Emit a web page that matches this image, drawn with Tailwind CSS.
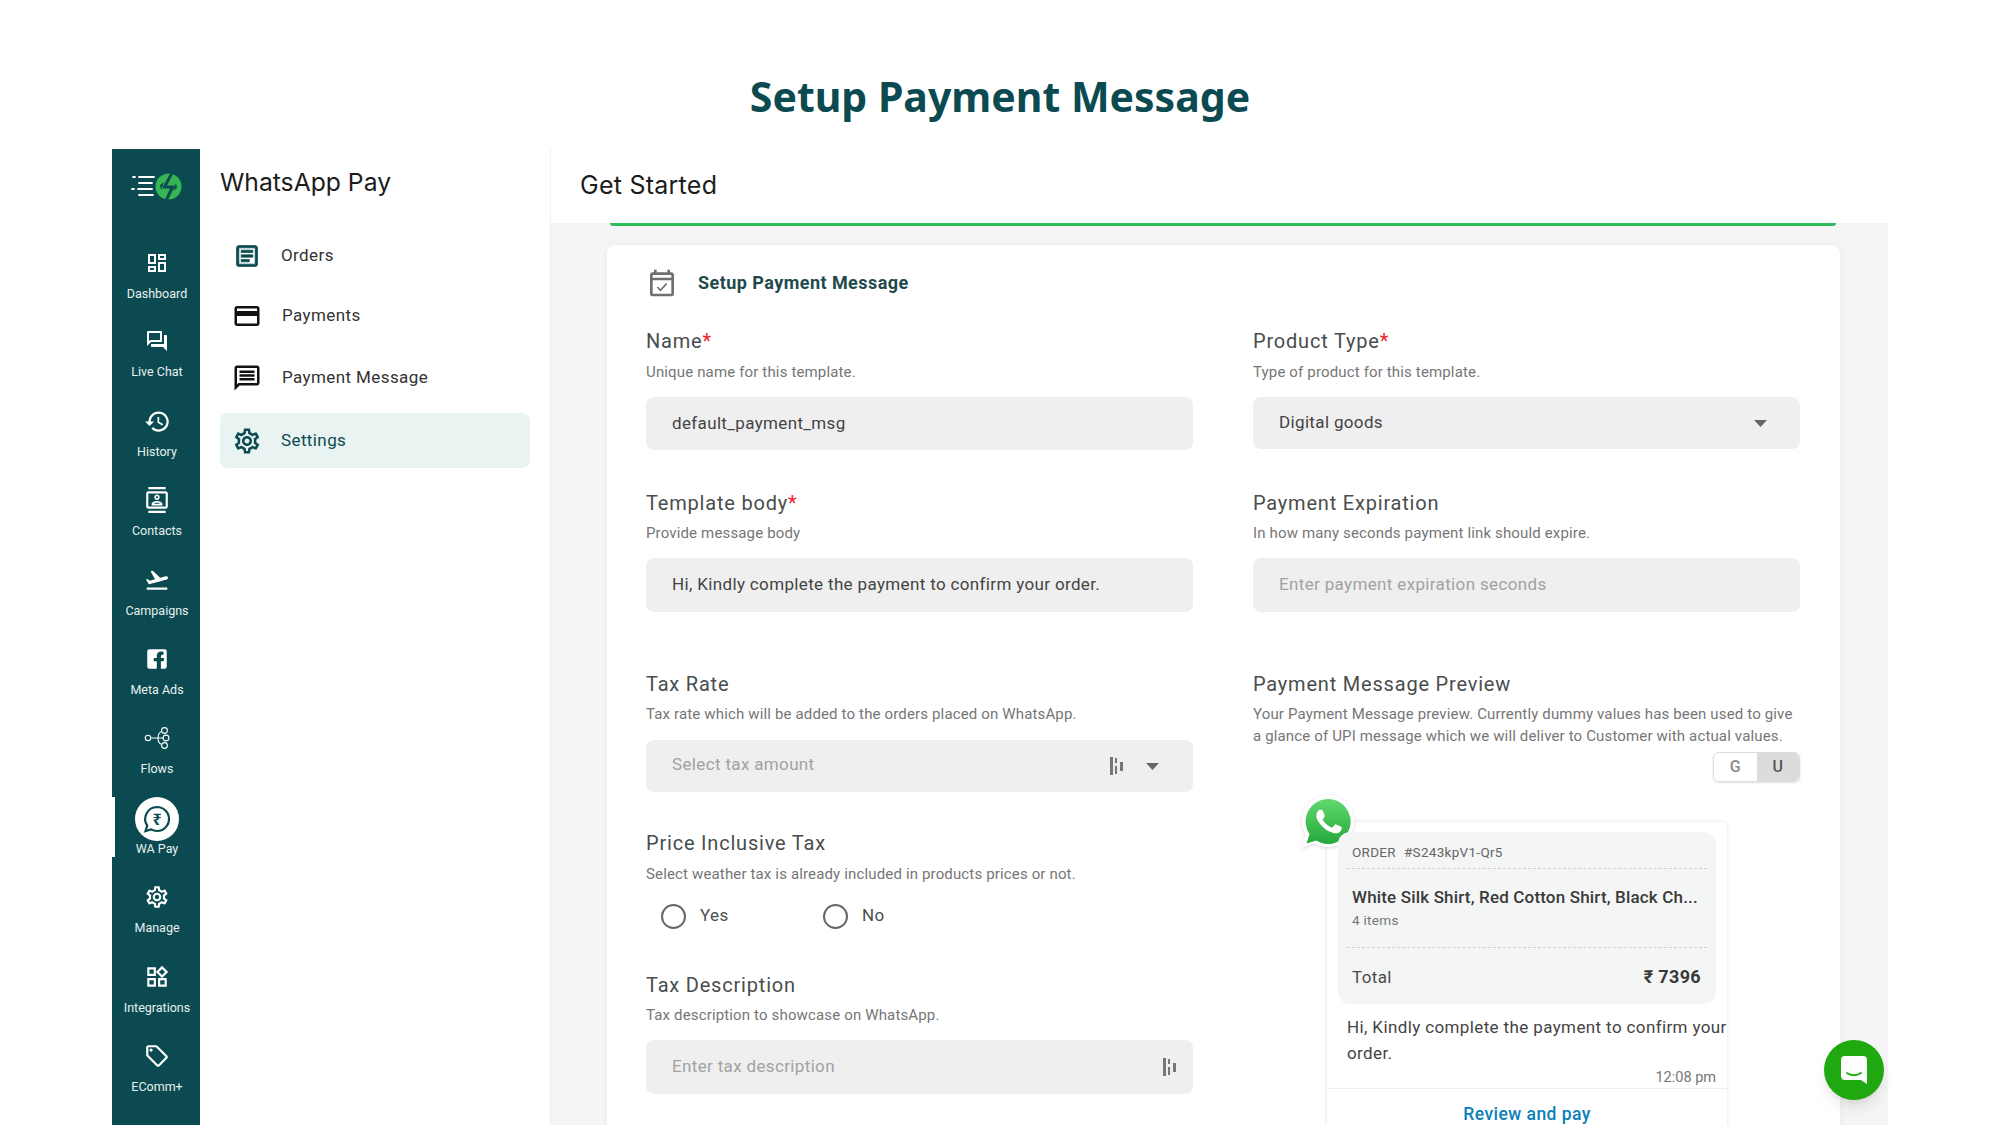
<!DOCTYPE html>
<html lang="en">
<head>
    <meta charset="UTF-8">
    <meta name="viewport" content="width=device-width, initial-scale=1.0">
    <title>Setup Payment Message</title>
    <script src="https://cdn.jsdelivr.net/npm/@tailwindcss/browser@4"></script>
</head>
<body class="relative h-[1125px] w-[2000px] overflow-hidden bg-white font-['Roboto',sans-serif] text-[#3f4343]">
    <h1 class="flex h-[149px] items-start justify-center pt-[69px] font-['Noto_Sans',sans-serif] text-[41px] font-bold leading-[54px] text-[#0b4a50]">Setup Payment Message</h1>

    <div class="mx-[112px] flex h-[976px]">
        <!-- Icon rail -->
        <nav class="flex w-[88px] shrink-0 flex-col bg-[#0b4a50] text-[12.5px] text-[#e8f0f0]">
            <div class="flex h-[74px] items-center justify-center pl-[2px]">
                <svg width="52" height="28" viewBox="10 7 52 28">
                    <g fill="none" stroke="#fff" stroke-width="1.8" stroke-linecap="round">
                        <path d="M12 12h2M18 12h15M18 18h13M11 24h2M17 24h14M18 30h14"/>
                    </g>
                    <circle cx="47.5" cy="21.5" r="13" fill="#35b653"/>
                    <path d="M52 6 43.500 22h8L44 38" fill="none" stroke="#0b4a50" stroke-width="3"/>
                    <path d="M40 25l3-8-4 3zM55 18l-3 8 4-3z" fill="#0b4a50"/>
                </svg>
            </div>
            <a class="flex h-[79.4px] flex-col items-center pl-[2px] pt-[28px]">
                <svg class="h-6 w-6 fill-white" viewBox="0 0 24 24"><path d="M19 5v2h-4V5h4M9 5v6H5V5h4m10 8v6h-4v-6h4M9 17v2H5v-2h4M21 3h-8v6h8V3zM11 3H3v10h8V3zm10 8h-8v10h8V11zm-10 4H3v6h8v-6z"/></svg>
                <span class="mt-[11px] leading-4">Dashboard</span>
            </a>
            <a class="flex h-[79.4px] flex-col items-center pl-[2px] pt-[27px]">
                <svg class="h-6 w-6 fill-white" viewBox="0 0 24 24"><path d="M15 4v7H5.17L4 12.17V4h11m1-2H3c-.55 0-1 .45-1 1v14l4-4h10c.55 0 1-.45 1-1V3c0-.55-.45-1-1-1zm5 4h-2v9H6v2c0 .55.45 1 1 1h11l4 4V7c0-.55-.45-1-1-1z"/></svg>
                <span class="mt-[11px] leading-4">Live Chat</span>
            </a>
            <a class="flex h-[79.4px] flex-col items-center pl-[2px] pt-[26px]">
                <svg class="h-[27px] w-[27px] fill-white" viewBox="0 0 24 24"><path d="M13 3c-4.97 0-9 4.03-9 9H1l3.89 3.89.07.14L9 12H6c0-3.87 3.13-7 7-7s7 3.13 7 7-3.13 7-7 7c-1.93 0-3.68-.79-4.94-2.06l-1.42 1.42C8.27 19.99 10.51 21 13 21c4.97 0 9-4.03 9-9s-4.03-9-9-9zm-1 5v5l4.28 2.54.72-1.21-3.5-2.08V8H12z"/></svg>
                <span class="mt-[9px] leading-4">History</span>
            </a>
            <a class="flex h-[79.4px] flex-col items-center pl-[2px] pt-[26px]">
                <svg class="h-[26px] w-[26px] fill-white" viewBox="0 0 24 24"><path d="M20 0H4v2h16V0zM4 24h16v-2H4v2zM20 4H4c-1.1 0-2 .9-2 2v12c0 1.1.9 2 2 2h16c1.1 0 2-.9 2-2V6c0-1.1-.9-2-2-2zm0 14H4V6h16v12zm-8-6c1.38 0 2.5-1.12 2.5-2.5S13.38 7 12 7 9.5 8.12 9.5 9.5 10.62 12 12 12zm0-3.5c.55 0 1 .45 1 1s-.45 1-1 1-1-.45-1-1 .45-1 1-1zm5 7.49C17 13.9 13.69 13 12 13s-5 .9-5 2.99V17h10v-1.01zm-8.19-.49c.61-.52 2.03-1 3.19-1 1.17 0 2.59.48 3.2 1H8.81z"/></svg>
                <span class="mt-[10px] leading-4">Contacts</span>
            </a>
            <a class="flex h-[79.4px] flex-col items-center pl-[2px] pt-[26px]">
                <svg class="h-[26px] w-[26px] fill-white" viewBox="0 0 24 24"><path d="M2.5 19h19v2h-19v-2zm19.57-9.36c-.21-.8-1.04-1.28-1.84-1.06L14.92 10l-6.9-6.43-1.93.51 4.14 7.17-4.97 1.33-1.97-1.54-1.45.39 2.59 4.49s7.12-1.9 16.57-4.43c.81-.23 1.28-1.05 1.07-1.85z"/></svg>
                <span class="mt-[10px] leading-4">Campaigns</span>
            </a>
            <a class="flex h-[79.4px] flex-col items-center pl-[2px] pt-[26px]">
                <svg class="h-[26px] w-[26px] fill-white" viewBox="0 0 24 24"><path d="M5 3h14a2 2 0 0 1 2 2v14a2 2 0 0 1-2 2h-3.400v-7h2.500l.5-3h-3V9.500c0-.8.4-1.500 1.600-1.500H18V5.200c-.5 0-1.400-.2-2.400-.2-2.400 0-3.800 1.500-3.800 4v2H9v3h2.800v7H5a2 2 0 0 1-2-2V5a2 2 0 0 1 2-2z"/></svg>
                <span class="mt-[10px] leading-4">Meta Ads</span>
            </a>
            <a class="flex h-[79.4px] flex-col items-center pl-[2px] pt-[26px]">
                <svg class="h-[26px] w-[26px] fill-none stroke-white" viewBox="0 0 26 26" stroke-width="1.1">
                    <circle cx="4" cy="13" r="2.700"/><circle cx="20.500" cy="5.500" r="2.900"/><circle cx="22" cy="13" r="2.900"/><circle cx="20.500" cy="20.500" r="2.900"/>
                    <path d="M6.700 13h12.400M17.800 6.500c-3 1-3.800 3-3.800 6.500s.8 5.500 3.800 6.500"/>
                </svg>
                <span class="mt-[10px] leading-4">Flows</span>
            </a>
            <a class="relative flex h-[79.4px] flex-col items-center pl-[2px] pt-[18px]">
                <span class="absolute left-0 top-[18px] h-[60px] w-[3px] bg-white"></span>
                <span class="flex h-[44px] w-[44px] shrink-0 items-center justify-center rounded-full bg-white">
                    <svg class="h-[32px] w-[32px]" viewBox="0 0 32 32">
                        <path d="M16 4a12 12 0 0 1 0 24c-2.200 0-4.300-.6-6-1.600L4.500 28l1.700-5.400A12 12 0 0 1 16 4z" fill="none" stroke="#0b4a50" stroke-width="2.200"/>
                        <text x="16" y="22" text-anchor="middle" font-family="'Noto Sans',sans-serif" font-size="16" font-weight="700" fill="#0b4a50">₹</text>
                    </svg>
                </span>
                <span class="leading-4">WA Pay</span>
            </a>
            <a class="flex h-[79.4px] flex-col items-center pl-[2px] pt-[26px]">
                <svg class="h-[26px] w-[26px] fill-white" viewBox="0 0 24 24"><path d="M19.430 12.980c.04-.32.07-.64.07-.98 0-.34-.03-.66-.07-.98l2.110-1.650c.19-.15.24-.42.12-.64l-2-3.460c-.09-.16-.26-.25-.44-.25-.06 0-.12.01-.17.03l-2.490 1c-.52-.4-1.080-.73-1.690-.98l-.38-2.650C14.460 2.180 14.250 2 14 2h-4c-.25 0-.46.18-.49.42l-.38 2.650c-.61.25-1.170.59-1.690.98l-2.490-1c-.06-.02-.12-.03-.18-.03-.17 0-.34.09-.43.25l-2 3.460c-.13.22-.07.49.12.64l2.110 1.650c-.04.32-.07.65-.07.98 0 .33.03.66.07.98l-2.110 1.650c-.19.15-.24.42-.12.64l2 3.460c.09.16.26.25.44.25.06 0 .12-.01.17-.03l2.490-1c.52.4 1.080.73 1.690.98l.38 2.650c.03.24.24.42.49.42h4c.25 0 .46-.18.49-.42l.38-2.650c.61-.25 1.170-.59 1.690-.98l2.490 1c.06.02.12.03.18.03.17 0 .34-.09.43-.25l2-3.460c.12-.22.07-.49-.12-.64l-2.110-1.650zm-1.980-1.710c.04.31.05.52.05.73 0 .21-.02.43-.05.73l-.14 1.130.89.7 1.080.84-.7 1.210-1.270-.51-1.040-.42-.9.68c-.43.32-.84.56-1.250.73l-1.060.43-.16 1.130-.2 1.350h-1.400l-.19-1.350-.16-1.130-1.060-.43c-.43-.18-.83-.41-1.230-.71l-.91-.7-1.060.43-1.270.51-.7-1.210 1.080-.84.89-.7-.14-1.130c-.03-.31-.05-.54-.05-.74s.02-.43.05-.73l.14-1.130-.89-.7-1.080-.84.7-1.210 1.270.51 1.040.42.9-.68c.43-.32.84-.56 1.250-.73l1.060-.43.16-1.130.2-1.350h1.390l.19 1.350.16 1.130 1.060.43c.43.18.83.41 1.230.71l.91.7 1.060-.43 1.270-.51.7 1.210-1.070.85-.89.7.14 1.130zM12 8c-2.210 0-4 1.790-4 4s1.790 4 4 4 4-1.790 4-4-1.790-4-4-4zm0 6c-1.100 0-2-.9-2-2s.9-2 2-2 2 .9 2 2-.9 2-2 2z"/></svg>
                <span class="mt-[10px] leading-4">Manage</span>
            </a>
            <a class="flex h-[79.4px] flex-col items-center pl-[2px] pt-[26px]">
                <svg class="h-[26px] w-[26px] fill-white" viewBox="0 0 24 24"><path d="M16.660 4.520l2.830 2.830-2.830 2.830-2.830-2.830 2.830-2.830M9 5v4H5V5h4m10 10v4h-4v-4h4M9 15v4H5v-4h4m7.660-13.310L11 7.340 16.660 13l5.660-5.660-5.660-5.650zM11 3H3v8h8V3zm10 10h-8v8h8v-8zm-10 0H3v8h8v-8z"/></svg>
                <span class="mt-[10px] leading-4">Integrations</span>
            </a>
            <a class="flex h-[79.4px] flex-col items-center pl-[2px] pt-[26px]">
                <svg class="h-[26px] w-[26px] fill-white" viewBox="0 0 24 24"><path d="M21.410 11.580l-9-9C12.050 2.220 11.550 2 11 2H4c-1.100 0-2 .9-2 2v7c0 .55.22 1.050.59 1.420l9 9c.36.36.86.58 1.410.58s1.050-.22 1.410-.59l7-7c.37-.36.59-.86.59-1.410s-.23-1.060-.59-1.420zM13 20.010L4 11V4h7v-.01l9 9-7 7.020z"/><circle cx="6.500" cy="6.500" r="1.500"/></svg>
                <span class="mt-[10px] leading-4">EComm+</span>
            </a>
        </nav>

        <!-- Section menu -->
        <aside class="w-[351px] shrink-0 border-r border-[#f0f0f0] pl-5 pr-[20px] pt-[16px]">
            <h2 class="font-['Inter',sans-serif] text-[24.7px] leading-[34px] text-[#1c1c1c]">WhatsApp Pay</h2>
            <ul class="mt-[27px] text-[17px] tracking-[0.4px]">
                <li class="flex h-[60px] items-center pl-[13px] text-[#333]">
                    <svg class="h-[28px] w-[28px] fill-[#0b4a50] stroke-[#0b4a50] stroke-[0.6]" viewBox="0 0 24 24"><path d="M19 5v14H5V5h14m0-2H5c-1.100 0-2 .9-2 2v14c0 1.100.9 2 2 2h14c1.100 0 2-.9 2-2V5c0-1.100-.9-2-2-2zm-5 14H7v-2h7v2zm3-4H7v-2h10v2zm0-4H7V7h10v2z"/></svg>
                    <span class="ml-[20px]">Orders</span>
                </li>
                <li class="flex h-[60px] items-center pl-[12px] text-[#333]">
                    <svg class="h-[30px] w-[30px] fill-[#111]" viewBox="0 0 24 24"><path d="M20 4H4c-1.110 0-1.990.89-1.990 2L2 18c0 1.110.89 2 2 2h16c1.110 0 2-.89 2-2V6c0-1.110-.89-2-2-2zm0 14H4v-6h16v6zm0-10H4V6h16v2z"/></svg>
                    <span class="ml-[20px]">Payments</span>
                </li>
                <li class="flex h-[64px] items-center pl-[12px] text-[#333]">
                    <svg class="h-[30px] w-[30px] fill-[#111]" viewBox="0 0 24 24"><path d="M20 2H4c-1.100 0-2 .9-2 2v18l4-4h14c1.100 0 2-.9 2-2V4c0-1.100-.9-2-2-2zm0 14H5.170L4 17.170V4h16v12zM6 12h12v2H6zm0-3h12v2H6zm0-3h12v2H6z"/></svg>
                    <span class="ml-[20px]">Payment Message</span>
                </li>
                <li class="mt-[3px] flex h-[55px] items-center rounded-lg bg-[#e9f3f1] pl-[12px] text-[#0b4a50]">
                    <svg class="h-[30px] w-[30px] fill-[#0b4a50]" viewBox="0 0 24 24"><path d="M19.430 12.980c.04-.32.07-.64.07-.98 0-.34-.03-.66-.07-.98l2.110-1.650c.19-.15.24-.42.12-.64l-2-3.460c-.09-.16-.26-.25-.44-.25-.06 0-.12.01-.17.03l-2.490 1c-.52-.4-1.080-.73-1.690-.98l-.38-2.650C14.460 2.180 14.250 2 14 2h-4c-.25 0-.46.18-.49.42l-.38 2.650c-.61.25-1.170.59-1.690.98l-2.490-1c-.06-.02-.12-.03-.18-.03-.17 0-.34.09-.43.25l-2 3.460c-.13.22-.07.49.12.64l2.110 1.650c-.04.32-.07.65-.07.98 0 .33.03.66.07.98l-2.110 1.650c-.19.15-.24.42-.12.64l2 3.460c.09.16.26.25.44.25.06 0 .12-.01.17-.03l2.490-1c.52.4 1.080.73 1.690.98l.38 2.650c.03.24.24.42.49.42h4c.25 0 .46-.18.49-.42l.38-2.650c.61-.25 1.170-.59 1.690-.98l2.490 1c.06.02.12.03.18.03.17 0 .34-.09.43-.25l2-3.460c.12-.22.07-.49-.12-.64l-2.110-1.650zm-1.980-1.710c.04.31.05.52.05.73 0 .21-.02.43-.05.73l-.14 1.130.89.7 1.080.84-.7 1.210-1.270-.51-1.040-.42-.9.68c-.43.32-.84.56-1.250.73l-1.060.43-.16 1.130-.2 1.350h-1.400l-.19-1.350-.16-1.130-1.060-.43c-.43-.18-.83-.41-1.230-.71l-.91-.7-1.060.43-1.270.51-.7-1.210 1.080-.84.89-.7-.14-1.130c-.03-.31-.05-.54-.05-.74s.02-.43.05-.73l.14-1.130-.89-.7-1.080-.84.7-1.210 1.270.51 1.040.42.9-.68c.43-.32.84-.56 1.250-.73l1.060-.43.16-1.130.2-1.350h1.390l.19 1.350.16 1.130 1.060.43c.43.18.83.41 1.230.71l.91.7 1.060-.43 1.270-.51.7 1.210-1.070.85-.89.7.14 1.130zM12 8c-2.210 0-4 1.790-4 4s1.790 4 4 4 4-1.790 4-4-1.790-4-4-4zm0 6c-1.100 0-2-.9-2-2s.9-2 2-2 2 .9 2 2-.9 2-2 2z"/></svg>
                    <span class="ml-[19px]">Settings</span>
                </li>
            </ul>
        </aside>

        <!-- Main -->
        <main class="flex min-w-0 flex-1 flex-col overflow-hidden">
            <div class="flex h-[74px] shrink-0 items-center pl-[29px] font-['Inter',sans-serif] text-[25px] tracking-[0.25px] text-[#1c1c1c]">Get Started</div>
            <div class="flex-1 bg-[#f5f5f5] pl-[56px] pr-[48px]">
                <div class="ml-[3px] mr-[4px] h-[3px] rounded-b bg-[#2fbd5a]"></div>
                <section class="relative mt-[19px] h-[900px] rounded-lg bg-white pl-[39px] pr-[40px] shadow-[0_0_6px_rgba(0,0,0,0.06)]">
                    <div class="flex h-[76px] items-center pb-[1px]">
                        <svg class="h-[32px] w-[32px] fill-[#6f6f6f]" viewBox="0 0 24 24"><path d="M19 4h-1V2h-2v2H8V2H6v2H5c-1.100 0-2 .9-2 2v14c0 1.100.9 2 2 2h14c1.100 0 2-.9 2-2V6c0-1.100-.9-2-2-2zm0 16H5V10h14v10zm0-12H5V6h14v2z"/><path d="M8.500 15l2.300 2.500 4.700-5" fill="none" stroke="#6f6f6f" stroke-width="1.200"/></svg>
                        <h3 class="ml-[20px] text-[18px] font-bold tracking-[0.45px] text-[#1f4a4d]">Setup Payment Message</h3>
                    </div>

                    <div class="flex justify-between text-[#4a4d4d]">
                        <!-- Left column -->
                        <div class="w-[547px]">
                            <label class="block pt-[8px] text-[20px] leading-6 tracking-[0.8px]">Name<span class="text-[#f0202a]">*</span></label>
                            <p class="mt-[9px] text-[15px] leading-5 tracking-[0.15px] text-[#767676]">Unique name for this template.</p>
                            <div class="mt-[15px] flex h-[53px] items-center rounded-lg bg-[#efefef] pl-[26px] text-[17px] tracking-[0.35px] text-[#444]">default_payment_msg</div>

                            <label class="mt-[41px] block text-[20px] leading-6 tracking-[0.8px]">Template body<span class="text-[#f0202a]">*</span></label>
                            <p class="mt-[8px] text-[15px] leading-5 tracking-[0.15px] text-[#767676]">Provide message body</p>
                            <div class="mt-[15px] flex h-[54px] items-center rounded-lg bg-[#efefef] pl-[26px] text-[17px] tracking-[0.35px] text-[#444]">Hi, Kindly complete the payment to confirm your order.</div>

                            <label class="mt-[60px] block text-[20px] leading-6 tracking-[0.8px]">Tax Rate</label>
                            <p class="mt-[8px] text-[15px] leading-5 tracking-[0.15px] text-[#767676]">Tax rate which will be added to the orders placed on WhatsApp.</p>
                            <div class="mt-[16px] flex h-[52px] items-center rounded-lg bg-[#efefef] pl-[26px] pr-[34px] text-[17px] tracking-[0.35px] text-[#a2a2a2]">
                                <span class="flex-1 pb-[2px]">Select tax amount</span>
                                <svg class="h-[18px] w-[14px] fill-[#777]" viewBox="0 0 14 18"><rect x="0" y="0" width="3" height="18"/><rect x="5" y="1" width="2" height="5"/><rect x="5" y="9" width="2" height="8"/><rect x="10" y="5" width="3" height="9"/></svg>
                                <svg class="ml-[22px] h-[7px] w-[13px] fill-[#666]" viewBox="0 0 13 7"><path d="M0 0h13L6.500 7z"/></svg>
                            </div>

                            <label class="mt-[39px] block text-[20px] leading-6 tracking-[0.8px]">Price Inclusive Tax</label>
                            <p class="mt-[9px] text-[15px] leading-5 tracking-[0.15px] text-[#767676]">Select weather tax is already included in products prices or not.</p>
                            <div class="mt-[19px] flex h-[26px] items-center pl-[15px] text-[17px] tracking-[0.35px]">
                                <span class="h-[25px] w-[25px] rounded-full border-2 border-[#666]"></span>
                                <span class="ml-[14px] w-[123px]">Yes</span>
                                <span class="h-[25px] w-[25px] rounded-full border-2 border-[#666]"></span>
                                <span class="ml-[14px]">No</span>
                            </div>

                            <label class="mt-[44px] block text-[20px] leading-6 tracking-[0.8px]">Tax Description</label>
                            <p class="mt-[8px] text-[15px] leading-5 tracking-[0.15px] text-[#767676]">Tax description to showcase on WhatsApp.</p>
                            <div class="mt-[15px] flex h-[54px] items-center rounded-lg bg-[#efefef] pl-[26px] pr-[16px] text-[17px] tracking-[0.35px] text-[#a2a2a2]">
                                <span class="flex-1">Enter tax description</span>
                                <svg class="h-[18px] w-[14px] fill-[#777]" viewBox="0 0 14 18"><rect x="0" y="0" width="3" height="18"/><rect x="5" y="1" width="2" height="5"/><rect x="5" y="9" width="2" height="8"/><rect x="10" y="5" width="3" height="9"/></svg>
                            </div>
                        </div>

                        <!-- Right column -->
                        <div class="w-[547px]">
                            <label class="block pt-[8px] text-[20px] leading-6 tracking-[0.8px]">Product Type<span class="text-[#f0202a]">*</span></label>
                            <p class="mt-[9px] text-[15px] leading-5 tracking-[0.15px] text-[#767676]">Type of product for this template.</p>
                            <div class="mt-[15px] flex h-[52px] items-center rounded-lg bg-[#efefef] pl-[26px] pr-[33px] text-[17px] tracking-[0.35px] text-[#444]">
                                <span class="flex-1 pb-[1px]">Digital goods</span>
                                <svg class="h-[7px] w-[13px] fill-[#666]" viewBox="0 0 13 7"><path d="M0 0h13L6.500 7z"/></svg>
                            </div>

                            <label class="mt-[42px] block text-[20px] leading-6 tracking-[0.8px]">Payment Expiration</label>
                            <p class="mt-[8px] text-[15px] leading-5 tracking-[0.15px] text-[#767676]">In how many seconds payment link should expire.</p>
                            <div class="mt-[15px] flex h-[54px] items-center rounded-lg bg-[#efefef] pl-[26px] text-[17px] tracking-[0.35px] text-[#a2a2a2]">Enter payment expiration seconds</div>

                            <label class="mt-[60px] block text-[20px] leading-6 tracking-[0.8px]">Payment Message Preview</label>
                            <p class="mt-[7px] text-[15px] leading-[22px] tracking-[0.15px] text-[#767676]">Your Payment Message preview. Currently dummy values has been used to give<br>a glance of UPI message which we will deliver to Customer with actual values.</p>

                            <div class="mt-[5px] flex justify-end">
                                <div class="flex h-[30px] w-[87px] overflow-hidden rounded-md border border-[#dedede] text-[16px] font-medium shadow-sm">
                                    <span class="flex flex-1 items-center justify-center text-[#8a8a8a]">G</span>
                                    <span class="flex flex-1 items-center justify-center bg-[#dcdcdc] text-[#555]">U</span>
                                </div>
                            </div>

                            <!-- Message preview -->
                            <div class="relative ml-[74px] mt-[40px] h-[320px] w-[400px] rounded-t-md bg-white shadow-[0_0_4px_rgba(0,0,0,0.12)]">
                                <svg class="absolute left-[-27px] top-[-27px] h-[54px] w-[54px] drop-shadow" viewBox="0 0 54 54">
                                    <defs>
                                        <linearGradient id="wa" x1="0" y1="0" x2="0" y2="1"><stop offset="0" stop-color="#60d96d"/><stop offset="1" stop-color="#27a83c"/></linearGradient>
                                    </defs>
                                    <path d="M28 0a26 26 0 1 1-13.500 48.200L1 53l4.500-13.500A26 26 0 0 1 28 0z" fill="#fff"/>
                                    <path d="M28 4a22.500 22.500 0 1 1-11.800 41.600L6.500 48.500l3-9.300A22.500 22.500 0 0 1 28 4z" fill="url(#wa)"/>
                                    <g transform="translate(3.700 1.300) scale(2.100)">
                                        <path fill="#fff" d="M17.472 14.382c-.297-.149-1.758-.867-2.030-.967-.273-.099-.471-.148-.67.150-.197.297-.767.966-.94 1.164-.173.199-.347.223-.644.075-.297-.15-1.255-.463-2.390-1.475-.883-.788-1.480-1.761-1.653-2.059-.173-.297-.018-.458.130-.606.134-.133.298-.347.446-.52.149-.174.198-.298.298-.497.099-.198.05-.371-.025-.52-.075-.149-.669-1.612-.916-2.207-.242-.579-.487-.5-.669-.51-.173-.008-.371-.01-.57-.01-.198 0-.52.074-.792.372-.272.297-1.040 1.016-1.040 2.479 0 1.462 1.065 2.875 1.213 3.074.149.198 2.096 3.200 5.077 4.487.709.306 1.262.489 1.694.625.712.227 1.360.195 1.871.118.571-.085 1.758-.719 2.006-1.413.248-.694.248-1.289.173-1.413-.074-.124-.272-.198-.57-.347z"/>
                                    </g>
                                </svg>
                                <div class="absolute left-[11px] top-[10px] h-[172px] w-[378px] rounded-xl bg-[#f4f5f5] px-[9px]">
                                    <div class="flex h-[29px] items-end gap-2 pl-[5px] text-[13.500px] leading-[18px] tracking-[0.3px] text-[#666]"><span>ORDER</span><span>#S243kpV1-Qr5</span></div>
                                    <div class="mt-[7px] border-t border-dashed border-[#cfcfcf] pl-[5px] pt-[18px] text-[17px] font-medium leading-5 tracking-[0.17px] text-[#3a3a3a]">White Silk Shirt, Red Cotton Shirt, Black Ch...</div>
                                    <div class="mt-[3px] pl-[5px] text-[13.500px] leading-[20px] tracking-[0.3px] text-[#777]">4 items</div>
                                    <div class="mt-[17px] flex items-center justify-between border-t border-dashed border-[#cfcfcf] pl-[5px] pr-[6px] pt-[18px] text-[17px] leading-[22px] tracking-[0.35px]">
                                        <span>Total</span><span class="text-[18px] font-bold text-[#3a3a3a]">₹ 7396</span>
                                    </div>
                                </div>
                                <div class="absolute left-[20px] top-[192px] w-[382px] text-[17px] leading-[26px] tracking-[0.38px] text-[#444]">Hi, Kindly complete the payment to confirm your order.</div>
                                <div class="absolute right-[11px] top-[247px] text-[14.500px] leading-[18px] text-[#777]">12:08 pm</div>
                                <div class="absolute left-0 right-0 top-[266px] flex h-[51px] items-center justify-center border-t border-[#eeeeee] text-[17.500px] font-medium tracking-[0.45px] text-[#0a80b8]">Review and pay</div>
                            </div>
                        </div>
                    </div>
                </section>
            </div>
        </main>
    </div>

    <!-- Chat launcher -->
    <button class="absolute left-[1824px] top-[1040px] flex h-[60px] w-[60px] items-center justify-center rounded-full bg-[#1fa80f] shadow-lg">
        <svg class="h-[28px] w-[26px]" viewBox="0 0 26 28"><path d="M4 0h18a4 4 0 0 1 4 4v24l-6-4H4a4 4 0 0 1-4-4V4a4 4 0 0 1 4-4z" fill="#fff"/><path d="M6 17c4 3 10 3 14 0" fill="none" stroke="#1fa80f" stroke-width="1.800" stroke-linecap="round"/></svg>
    </button>
</body>
</html>
